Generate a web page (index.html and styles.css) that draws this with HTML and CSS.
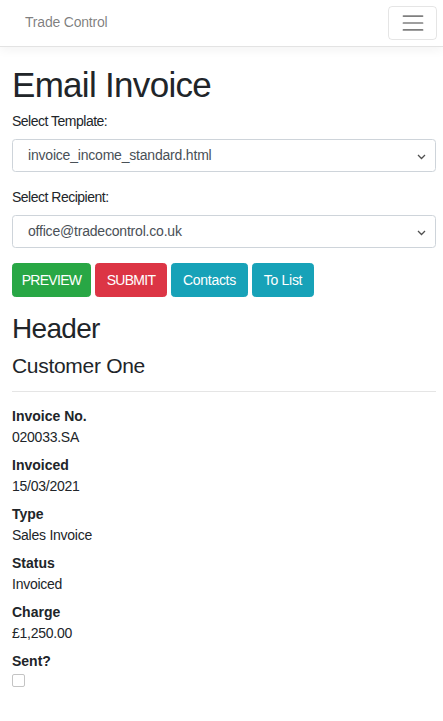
FILE: index.html
```html
<!DOCTYPE html>
<html lang="en">
<head>
<meta charset="utf-8">
<title>Email Invoice</title>
<link rel="stylesheet" href="styles.css">
</head>
<body>
<nav class="navbar">
  <span class="brand">Trade Control</span>
  <button class="toggler" type="button" aria-label="Toggle navigation">
    <svg class="toggler-icon" width="26" height="26" viewBox="0 0 30 30"><path stroke="rgba(0,0,0,0.5)" stroke-linecap="round" stroke-miterlimit="10" stroke-width="2" d="M4 7h22M4 15h22M4 23h22"/></svg>
  </button>
</nav>
<main class="content">
  <h1 class="title">Email Invoice</h1>
  <div class="form-group">
    <label class="label">Select Template:</label>
    <div class="select"><span>invoice_income_standard.html</span><svg class="chev" width="9" height="6" viewBox="0 0 9 6"><path d="M1 1l3.5 3.5L8 1" fill="none" stroke="#505050" stroke-width="1.3"/></svg></div>
  </div>
  <div class="form-group">
    <label class="label">Select Recipient:</label>
    <div class="select"><span>office@tradecontrol.co.uk</span><svg class="chev" width="9" height="6" viewBox="0 0 9 6"><path d="M1 1l3.5 3.5L8 1" fill="none" stroke="#505050" stroke-width="1.3"/></svg></div>
  </div>
  <div class="actions">
    <button class="btn btn-success btn-caps btn-preview">PREVIEW</button>
    <button class="btn btn-danger btn-caps btn-submit">SUBMIT</button>
    <button class="btn btn-info btn-contacts">Contacts</button>
    <button class="btn btn-info btn-list">To List</button>
  </div>
  <h2 class="section">Header</h2>
  <h4 class="customer">Customer One</h4>
  <hr class="rule">
  <dl class="details">
    <div class="item"><dt>Invoice No.</dt><dd>020033.SA</dd></div>
    <div class="item"><dt>Invoiced</dt><dd>15/03/2021</dd></div>
    <div class="item"><dt>Type</dt><dd>Sales Invoice</dd></div>
    <div class="item"><dt>Status</dt><dd>Invoiced</dd></div>
    <div class="item"><dt>Charge</dt><dd>£1,250.00</dd></div>
    <div class="item"><dt>Sent?</dt><dd><input class="check" type="checkbox" disabled></dd></div>
  </dl>
</main>
</body>
</html>
```
FILE: styles.css
```css
* { box-sizing: border-box; }
html, body { margin: 0; padding: 0; background: #fff; }
body {
  font-family: "Liberation Sans", Arial, sans-serif;
  font-size: 14px;
  line-height: 21px;
  color: #212529;
}
.navbar {
  height: 47px;
  display: flex;
  align-items: center;
  justify-content: space-between;
  padding: 0 6px 1px 25px;
  border-bottom: 1px solid #e3e3e3;
  box-shadow: 0 3px 10px rgba(0, 0, 0, 0.05);
}
.brand {
  font-size: 14px;
  color: rgba(0, 0, 0, 0.52);
  letter-spacing: -0.2px;
}
.toggler {
  width: 49px;
  height: 34px;
  padding: 0;
  display: flex;
  align-items: center;
  justify-content: center;
  background: transparent;
  border: 1px solid rgba(0, 0, 0, 0.1);
  border-radius: 4px;
}
.toggler-icon { display: block; }
.content { padding: 0 7px 0 12px; }
.title {
  margin: 17px 0 5px;
  font-size: 35px;
  line-height: 42px;
  font-weight: 400;
  letter-spacing: -0.7px;
}
.form-group { margin-bottom: 15px; }
.label {
  display: block;
  margin-bottom: 7px;
  letter-spacing: -0.5px;
}
.select {
  height: 33px;
  display: flex;
  align-items: center;
  justify-content: space-between;
  padding: 0 9px 0 15px;
  border: 1px solid #ced4da;
  border-radius: 3.5px;
  color: #495057;
  letter-spacing: -0.2px;
}
.chev { display: block; margin-top: 2px; }
.actions {
  display: flex;
  gap: 4px;
  margin-bottom: 15px;
}
.btn {
  height: 34px;
  padding: 0;
  border: 1px solid transparent;
  border-radius: 3.5px;
  font-family: inherit;
  font-size: 14px;
  line-height: 21px;
  color: #fff;
  text-align: center;
  letter-spacing: -0.3px;
}
.btn-caps { letter-spacing: -0.7px; }
.btn-success { background: #28a745; border-color: #28a745; }
.btn-danger { background: #dc3545; border-color: #dc3545; }
.btn-info { background: #17a2b8; border-color: #17a2b8; }
.btn-preview { width: 79px; }
.btn-submit { width: 72px; }
.btn-contacts { width: 77px; }
.btn-list { width: 62px; }
.section {
  margin: 0 0 7px;
  font-size: 28px;
  line-height: 34px;
  font-weight: 400;
  letter-spacing: -0.7px;
}
.customer {
  margin: 0;
  font-size: 21px;
  line-height: 25px;
  font-weight: 400;
  letter-spacing: -0.3px;
}
.rule {
  margin: 13px 0 14px;
  border: 0;
  border-top: 1px solid rgba(0, 0, 0, 0.1);
  height: 0;
}
.details { margin: 0; }
.item { margin-bottom: 7px; }
.details dt { font-weight: 700; }
.details dd { margin: 0; letter-spacing: -0.25px; }
.check {
  appearance: none;
  -webkit-appearance: none;
  display: block;
  width: 13px;
  height: 13px;
  margin: 2px 0 0;
  border: 1.5px solid #c4c4c4;
  border-radius: 2px;
  background: #fff;
}
```
